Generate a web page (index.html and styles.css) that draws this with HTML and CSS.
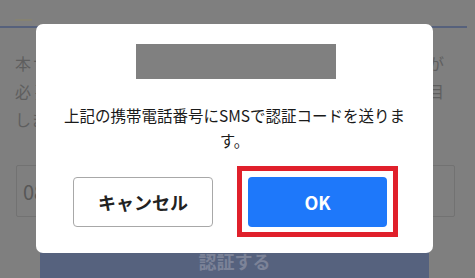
FILE: index.html
```html
<!DOCTYPE html>
<html lang="ja">
<head>
<meta charset="utf-8">
<link rel="stylesheet" href="styles.css">
</head>
<body>
<div class="page">
  <div class="tabs"><span class="tab-mark"></span></div>
  <div class="tab-line"></div>
  <div class="notice">
    <p class="line just">本サービスのご利用には、携帯電話番号による認証が</p>
    <p class="line just">必要です。下記に携帯電話番号を入力し、各項目</p>
    <p class="line">します。</p>
  </div>
  <div class="field">08012345678</div>
  <div class="submit">認証する</div>
</div>

<div class="dialog">
  <div class="dialog-title"></div>
  <p class="dialog-msg">上記の携帯電話番号にSMSで認証コードを送ります。</p>
  <div class="dialog-actions">
    <button class="btn btn-cancel">キャンセル</button>
    <div class="ok-wrap">
      <button class="btn btn-ok">OK</button>
      <span class="highlight"></span>
    </div>
  </div>
</div>
</body>
</html>
```

FILE: styles.css
```css
* { box-sizing: border-box; }
html, body {
  margin: 0;
  padding: 0;
}
body {
  width: 475px;
  height: 278px;
  overflow: hidden;
  background: #7f7f7f;
  font-family: "Noto Sans CJK JP", "Noto Sans", sans-serif;
  position: relative;
}
.page {
  display: flex;
  flex-direction: column;
}
.tabs {
  height: 26px;
  position: relative;
}
.tab-mark {
  position: absolute;
  left: 15px;
  top: 19px;
  width: 17px;
  height: 2px;
  background: #858272;
}
.tab-line {
  height: 2px;
  background: #56617c;
  margin-right: 8px;
}
.notice {
  padding: 21px 31px 0 15px;
  color: #5e5e5e;
  font-size: 16px;
}
.line {
  margin: 0;
  line-height: 28px;
  height: 28px;
}
.just {
  text-align: justify;
  text-align-last: justify;
}
.field {
  margin: 32px 20px 0 16px;
  height: 52px;
  border: 1px solid #727272;
  border-radius: 2px;
  padding-left: 6px;
  display: flex;
  align-items: center;
  font-size: 20px;
  color: #575757;
}
.submit {
  margin: 19px 46px 0 40px;
  height: 50px;
  background: #56627e;
  border-radius: 4px;
  color: #7c8398;
  font-weight: 700;
  font-size: 18px;
  display: flex;
  align-items: center;
  justify-content: center;
}

.dialog {
  position: absolute;
  left: 36px;
  top: 24px;
  width: 397px;
  height: 229px;
  background: #fff;
  border-radius: 7px;
  display: flex;
  flex-direction: column;
  align-items: center;
  padding-top: 20px;
}
.dialog-title {
  width: 200px;
  height: 35px;
  background: #808080;
  margin-left: 3px;
}
.dialog-msg {
  margin: 24px 0 0;
  padding: 0 20px;
  font-size: 15.5px;
  line-height: 24.5px;
  color: #1a1a1a;
  text-align: center;
}
.dialog-actions {
  align-self: stretch;
  display: flex;
  gap: 35px;
  padding-left: 37px;
  margin-top: 25px;
}
.btn {
  height: 50px;
  border-radius: 4px;
  font-family: "Noto Sans CJK JP", "Noto Sans", sans-serif;
  font-weight: 700;
  font-size: 18px;
  display: flex;
  align-items: center;
  justify-content: center;
  padding: 0;
  margin: 0;
}
.btn-cancel {
  width: 140px;
  background: #fff;
  border: 1px solid #a8a8a8;
  color: #222;
}
.ok-wrap {
  position: relative;
  width: 139px;
}
.btn-ok {
  width: 139px;
  background: #1e78fa;
  border: none;
  color: #fff;
}
.highlight {
  position: absolute;
  left: -11px;
  top: -11px;
  right: -11px;
  bottom: -10px;
  border: 5px solid #e0202b;
}
```
